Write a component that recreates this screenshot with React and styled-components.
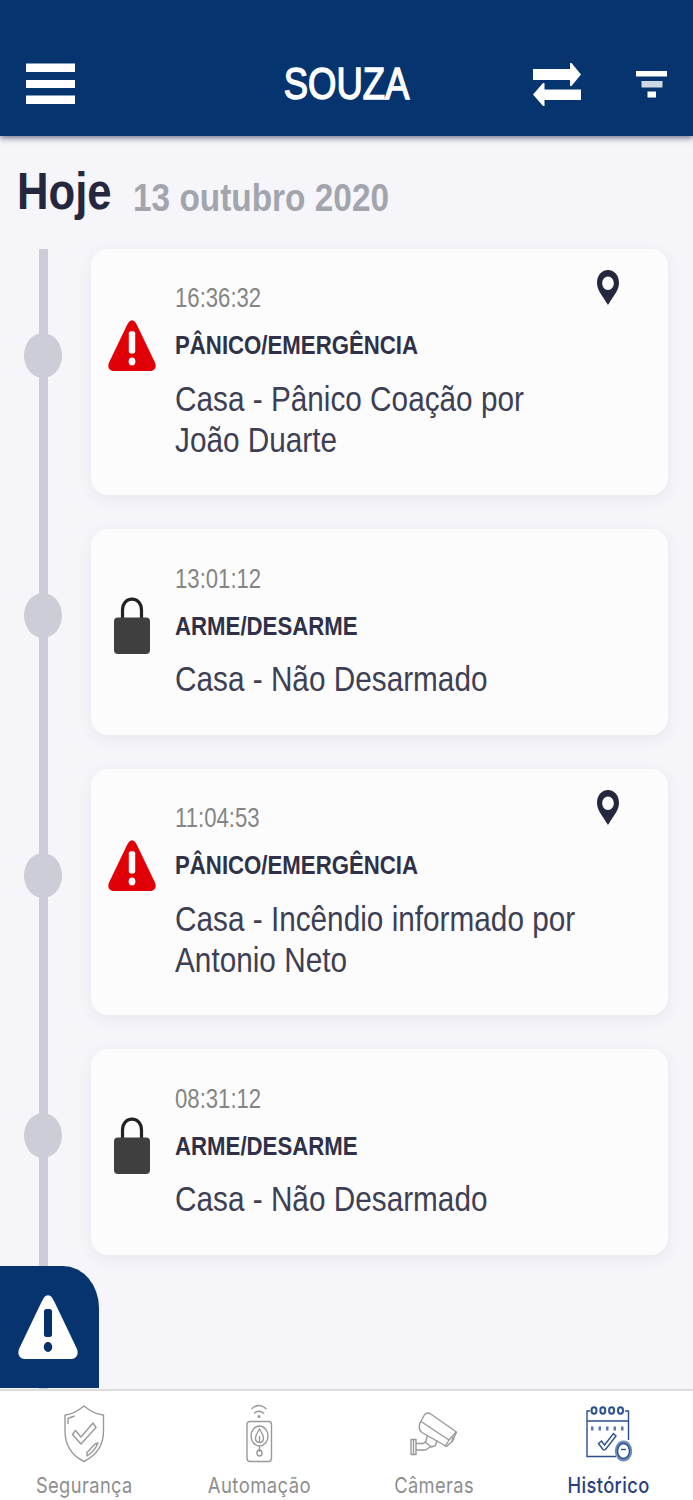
import React from "react";
import styled, { createGlobalStyle } from "styled-components";

const events = [
  {
    id: 1,
    type: "panic",
    time: "16:36:32",
    title: "PÂNICO/EMERGÊNCIA",
    lines: ["Casa - Pânico Coação por", "João Duarte"],
  },
  {
    id: 2,
    type: "arm",
    time: "13:01:12",
    title: "ARME/DESARME",
    lines: ["Casa - Não Desarmado"],
  },
  {
    id: 3,
    type: "panic",
    time: "11:04:53",
    title: "PÂNICO/EMERGÊNCIA",
    lines: ["Casa - Incêndio informado por", "Antonio Neto"],
  },
  {
    id: 4,
    type: "arm",
    time: "08:31:12",
    title: "ARME/DESARME",
    lines: ["Casa - Não Desarmado"],
  },
];

const MenuIcon = () => (
  <svg width="49" height="42" viewBox="0 0 49 42" fill="#fff">
    <path d="M0 0.5h49v8.5H0zM0 17h49v8H0zM0 32.5h49v8.5H0z" />
  </svg>
);

const SwapIcon = () => (
  <svg width="48" height="43" viewBox="0 0 48 43" fill="#fff">
    <path d="M0 6h37V0h1.500L48 11.500 38.500 23H37v-6H0z" />
    <path d="M48 26.500H11.500V20H10L0 31.500 10 43h1.500v-6H48z" />
  </svg>
);

const FilterIcon = () => (
  <svg width="31" height="27" viewBox="0 0 31 27">
    <path d="M0 0h31v5.500H0z" fill="#fff" />
    <path d="M5.500 10h21v6.500h-21z" fill="#ced7e4" />
    <path d="M11.500 20.500h8.500v6h-8.500z" fill="#fff" />
  </svg>
);

const AlertIcon = ({ width, height, fill, mark }) => (
  <svg
    width={width}
    height={height}
    viewBox="0 0 60 64"
    preserveAspectRatio="none"
  >
    <path
      d="M26 2.500Q30-2 34 2.500L36.500 7L59 54Q61.500 62 54 64H6Q-1.500 62 1 54L23.500 7z"
      fill={fill}
    />
    <rect x="26" y="14" width="8" height="28" rx="2.500" fill={mark} />
    <ellipse cx="30" cy="52" rx="4.200" ry="5" fill={mark} />
  </svg>
);

const LockIcon = () => (
  <svg width="36" height="58" viewBox="0 0 36 58">
    <path
      d="M8.500 23V13C8.500-1.500 27.500-1.500 27.500 13V23"
      fill="none"
      stroke="#222"
      strokeWidth="3.200"
    />
    <rect x="0" y="20.500" width="36" height="36.500" rx="4" fill="#3f3f3f" />
  </svg>
);

const PinIcon = () => (
  <svg width="22" height="35" viewBox="0 0 22 35">
    <path
      fillRule="evenodd"
      d="M11 0C4.500 0 0 5.500 0 13c0 7 5 12 11 22 6-10 11-15 11-22C22 5.500 17.500 0 11 0zm0 6.500c3.300 0 5.800 3 5.800 6.800S14.300 20 11 20s-5.800-3-5.800-6.700S7.700 6.500 11 6.500z"
      fill="#25273f"
    />
  </svg>
);

const ShieldIcon = () => (
  <svg width="48" height="60" viewBox="0 0 48 60">
    <g fill="none" stroke="#9a9a9a" strokeWidth="1.400" strokeLinejoin="round">
      <path d="M24 2C18 7 11 10.500 5 11v16C5 42 13 52 24 57.500c11-5.500 19.500-15.500 19.500-30.500V11C37 10.500 30 7 24 2z" />
      <path d="M12.500 30.500l3-4 5.500 6.500L33 19l3 4.500L21 40z" />
      <path d="M8 20v-5.500l6.500-2.500M27 52c6-4 9-8 11-13l-3 1-8 8.500z" />
    </g>
  </svg>
);

const RemoteIcon = () => (
  <svg width="48" height="60" viewBox="0 0 48 60">
    <g fill="none" stroke="#999" strokeWidth="1.400">
      <path d="M16.500 5Q24-2 31.500 5M19 9.500Q24 5 29 9.500" />
      <circle cx="24" cy="12.500" r="0.800" />
      <rect x="12" y="17.500" width="24.500" height="40" rx="3" />
      <ellipse cx="24.500" cy="32" rx="8.500" ry="10" />
      <path d="M24.500 25c-3 5-4 7-4 9 0 6 8 6 8 0 0-2-1-4-4-9zM24.500 32v6" />
      <ellipse cx="24.500" cy="49" rx="2.500" ry="3" />
      <path d="M24.500 42v6" />
    </g>
  </svg>
);

const CameraIcon = () => (
  <svg width="48" height="60" viewBox="0 0 48 60">
    <g fill="none" stroke="#999" strokeWidth="1.400" strokeLinejoin="round">
      <path d="M14 11.500Q16 8 20 9.500L46.500 28l-4 9-6 5.500L12 28.500Q8.500 26 9.500 20z" />
      <path d="M11 17.500l28 18.500 7-8M39 36l-4 6.500M43 33l-1 5" />
      <path d="M17.500 31.500l-2 7 6 4.500 4-1.500 1.500-5.500M1 35.500h5v15H1zM3.500 35.500v15M6 39.500h7.500l2.500-2.500M6 46h9.500l6-4" />
    </g>
  </svg>
);

const CalendarIcon = () => (
  <svg width="48" height="60" viewBox="0 0 48 60">
    <g fill="none" stroke="#2b4f8d" strokeWidth="1.400">
      <path d="M31 52.500H2V7H5M40 7h3.500v29M2 17h41.500" />
      {[9, 17.800, 26.600, 35.500].map((x) => (
        <ellipse key={x} cx={x} cy="6.500" rx="2.500" ry="3.200" strokeWidth="2" />
      ))}
      <path
        d="M6 24.500h34"
        strokeWidth="4"
        strokeDasharray="2.500 5"
        stroke="#5c78a8"
      />
      <path d="M13.500 39.500l3-2.500 3 4L28.500 29.500l2.500 2.500L20.500 45.500q-1.500 1-2.500 0z" />
      <ellipse
        cx="38.500"
        cy="47"
        rx="7.200"
        ry="9"
        fill="#fff"
        strokeWidth="3"
        stroke="#6f8bb8"
      />
      <ellipse cx="38.500" cy="47" rx="6" ry="7.500" strokeWidth="1.400" />
      <path d="M36 45.500h5" />
    </g>
  </svg>
);

const tabs = [
  { label: "Segurança", icon: <ShieldIcon />, squeeze: 0.83 },
  { label: "Automação", icon: <RemoteIcon />, squeeze: 0.84 },
  { label: "Câmeras", icon: <CameraIcon />, squeeze: 0.83 },
  { label: "Histórico", icon: <CalendarIcon />, squeeze: 0.83, active: true },
];

const App = () => {
  return (
    <>
      <GlobalStyle />
      <Screen>
        <Header>
          <MenuIcon />
          <Title>SOUZA</Title>
          <Actions>
            <SwapIcon />
            <FilterIcon />
          </Actions>
        </Header>
        <Main>
          <DayHeading>
            <Today>Hoje</Today>
            <DayDate>13 outubro 2020</DayDate>
          </DayHeading>
          <Timeline>
            <Rail>
              {events.map((item) => (
                <Dot key={item.id} />
              ))}
            </Rail>
            <CardList>
              {events.map((item) => {
                const { id, type, time, title, lines } = item;
                return (
                  <Card key={id}>
                    <CardIcon $type={type}>
                      {type === "panic" ? (
                        <AlertIcon
                          width={48}
                          height={51}
                          fill="#e10008"
                          mark="#fcfcfc"
                        />
                      ) : (
                        <LockIcon />
                      )}
                    </CardIcon>
                    <CardText>
                      <Time>{time}</Time>
                      <EventTitle>{title}</EventTitle>
                      {lines.map((line) => (
                        <Line key={line}>{line}</Line>
                      ))}
                    </CardText>
                    {type === "panic" && (
                      <Pin>
                        <PinIcon />
                      </Pin>
                    )}
                  </Card>
                );
              })}
            </CardList>
          </Timeline>
          <PanicButton>
            <AlertIcon width={60} height={64} fill="#fff" mark="#06306b" />
          </PanicButton>
        </Main>
        <TabBar>
          {tabs.map(({ label, icon, squeeze, active }) => (
            <Tab key={label}>
              {icon}
              <TabLabel $squeeze={squeeze} $active={active}>
                {label}
              </TabLabel>
            </Tab>
          ))}
        </TabBar>
      </Screen>
    </>
  );
};

const GlobalStyle = createGlobalStyle`
  * {
    box-sizing: border-box;
  }

  body {
    margin: 0;
    background: #f5f5fa;
    font-family: "Liberation Sans", Arial, sans-serif;
  }

  svg {
    display: block;
    flex-shrink: 0;
  }
`;

const Screen = styled.div`
  display: flex;
  flex-direction: column;
  width: 693px;
  height: 1500px;
  overflow: hidden;
`;

const Header = styled.header`
  display: grid;
  grid-template-columns: 1fr auto 1fr;
  align-items: center;
  height: 136px;
  padding: 32px 26px 0;
  background: #06346f;
  box-shadow: 0 2px 6px rgba(20, 24, 60, 0.6);
  z-index: 1;
`;

const Title = styled.h1`
  margin: 0;
  font-size: 45px;
  line-height: 50px;
  font-weight: 400;
  color: #fff;
  -webkit-text-stroke: 1.5px #fff;
  transform: scaleX(0.81);
`;

const Actions = styled.div`
  display: flex;
  align-items: center;
  justify-content: flex-end;
  gap: 55px;
`;

const Main = styled.main`
  position: relative;
  flex: 1;
  min-height: 0;
  display: flex;
  flex-direction: column;
`;

const DayHeading = styled.div`
  display: grid;
  grid-template-columns: 116px auto;
  align-items: start;
  height: 113px;
  padding: 25px 0 0 17px;
  white-space: nowrap;
`;

const Today = styled.h2`
  margin: 0;
  font-size: 52px;
  line-height: 60px;
  color: #25273f;
  transform: scaleX(0.84);
  transform-origin: left;
`;

const DayDate = styled.span`
  padding-top: 15px;
  font-size: 39px;
  line-height: 44px;
  font-weight: 700;
  color: #a3a5ae;
  transform: scaleX(0.856);
  transform-origin: left;
`;

const Timeline = styled.div`
  flex: 1;
  display: flex;
  padding-left: 24px;
`;

const Rail = styled.div`
  display: flex;
  flex-direction: column;
  align-items: center;
  gap: 215px;
  width: 38px;
  padding-top: 83.5px;
  background: linear-gradient(#cdcdd7, #cdcdd7) center / 9px 100% no-repeat;
`;

const Dot = styled.span`
  width: 38px;
  height: 45px;
  border-radius: 50%;
  background: #cdcdd7;
  flex-shrink: 0;
`;

const CardList = styled.div`
  display: flex;
  flex-direction: column;
  gap: 34px;
  margin-left: 29px;
`;

const Card = styled.article`
  display: grid;
  grid-template-columns: 84px 422px 1fr;
  align-items: start;
  width: 577px;
  border-radius: 17px;
  background: #fcfcfc;
  box-shadow: 0 4px 14px rgba(60, 60, 100, 0.08);
`;

const CardIcon = styled.div`
  padding: ${(p) => (p.$type === "panic" ? "71px 0 0 17px" : "68px 0 0 23px")};
`;

const CardText = styled.div`
  padding: 34.2px 0 35.8px;
  white-space: nowrap;
`;

const Time = styled.p`
  margin: 0 0 17px;
  font-size: 27px;
  line-height: 30px;
  color: #858585;
  transform: scaleX(0.82);
  transform-origin: left;
`;

const EventTitle = styled.h3`
  margin: 0 0 17.5px;
  font-size: 26.5px;
  line-height: 30px;
  color: #2f3149;
  transform: scaleX(0.838);
  transform-origin: left;
`;

const Line = styled.p`
  margin: 0;
  font-size: 35px;
  line-height: 41px;
  color: #3d3f55;
  transform: scaleX(0.85);
  transform-origin: left;
`;

const Pin = styled.div`
  padding-top: 21px;
`;

const PanicButton = styled.button`
  position: absolute;
  left: 0;
  bottom: 1px;
  display: flex;
  align-items: flex-start;
  width: 99px;
  height: 122px;
  padding: 29px 0 0 18px;
  border: 0;
  border-radius: 0 36px 0 0 / 0 42px 0 0;
  background: #06346f;
`;

const TabBar = styled.nav`
  position: relative;
  display: grid;
  grid-template-columns: repeat(4, 1fr);
  height: 111px;
  margin: 0 -3px;
  padding-top: 13px;
  border-top: 2px solid #dcdce0;
  background: #fff;
`;

const Tab = styled.div`
  display: flex;
  flex-direction: column;
  align-items: center;
`;

const TabLabel = styled.span`
  margin-top: 7px;
  font-family: Inter, "Liberation Sans", sans-serif;
  font-size: 22px;
  line-height: 28px;
  letter-spacing: 0.5px;
  font-weight: ${(p) => (p.$active ? 500 : 400)};
  color: ${(p) => (p.$active ? "#2a3f80" : "#8e8e8e")};
  transform: scaleX(${(p) => p.$squeeze});
`;

export default App;
